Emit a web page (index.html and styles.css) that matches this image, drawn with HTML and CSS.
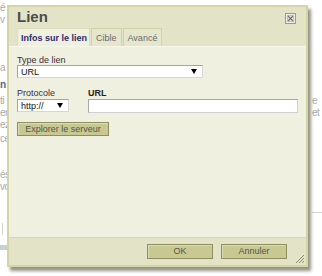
FILE: index.html
```html
<!DOCTYPE html>
<html lang="fr">
<head>
<meta charset="utf-8">
<title>Lien</title>
<link rel="stylesheet" href="styles.css">
</head>
<body>
<div class="page">
  <div class="strip strip-left">
    <div class="frag">é</div>
    <div class="frag">v</div>
    <div class="frag mt36">a</div>
    <div class="frag link mt5">n</div>
    <div class="frag mt4">ti</div>
    <div class="frag">en</div>
    <div class="frag">ez</div>
    <div class="frag mt2">ce</div>
    <div class="frag mt24">és</div>
    <div class="frag">vo</div>
    <div class="rule-v"></div>
    <div class="band"></div>
  </div>
  <div class="strip strip-right">
    <div class="frag mt95">e</div>
    <div class="frag">et</div>
    <div class="rule-h"></div>
  </div>
</div>

<div class="dialog">
  <div class="title-row">
    <div class="title">Lien</div>
    <svg class="close" width="11" height="11" viewBox="0 0 11 11">
      <rect x="0.5" y="0.5" width="10" height="10" fill="#ecece4" stroke="#9c9c94"/>
      <rect x="2.5" y="2.5" width="6" height="6" fill="none" stroke="#c4c4bc"/>
      <path d="M3 3 L8 8 M8 3 L3 8" stroke="#6f6f6a" stroke-width="1.2"/>
    </svg>
  </div>
  <div class="tabs">
    <div class="tab active">Infos sur le lien</div>
    <div class="tab">Cible</div>
    <div class="tab">Avancé</div>
  </div>
  <div class="content">
    <label class="field-label">Type de lien</label>
    <div class="select select-url">
      <span>URL</span>
      <svg width="6" height="5" viewBox="0 0 6 5"><polygon points="0,0 6,0 3,5" fill="#000"/></svg>
    </div>
    <div class="row">
      <div class="col-proto">
        <label class="field-label gap">Protocole</label>
        <div class="select select-proto">
          <span>http://</span>
          <svg width="6" height="5" viewBox="0 0 6 5"><polygon points="0,0 6,0 3,5" fill="#000"/></svg>
        </div>
      </div>
      <div class="col-url">
        <label class="field-label gap strong">URL</label>
        <div class="input"></div>
      </div>
    </div>
    <div class="btn browse">Explorer le serveur</div>
  </div>
  <div class="footer">
    <div class="btn footer-btn">OK</div>
    <div class="btn footer-btn">Annuler</div>
  </div>
  <svg class="grip" width="10" height="10" viewBox="0 0 10 10">
    <path d="M9 1 L1 9 M9 4 L4 9 M9 7 L7 9" stroke="#8a8a70" stroke-width="1"/>
  </svg>
</div>
</body>
</html>
```
FILE: styles.css
```css
* { box-sizing: border-box; }

body {
  margin: 0;
  width: 322px;
  height: 276px;
  overflow: hidden;
  position: relative;
  background: #fff;
  font-family: "Liberation Sans", Arial, sans-serif;
}

.page {
  display: flex;
  justify-content: space-between;
  height: 276px;
}

.strip {
  overflow: hidden;
  padding-top: 2px;
  display: flex;
  flex-direction: column;
}

.strip-left { width: 8px; }
.strip-right { width: 12px; padding-left: 2px; }

.frag {
  font-size: 10px;
  line-height: 12px;
  height: 12px;
  color: #a8a8a8;
  white-space: nowrap;
  letter-spacing: -0.5px;
}

.frag.link { color: #55649a; font-weight: bold; }

.mt2 { margin-top: 2px; }
.mt4 { margin-top: 4px; }
.mt5 { margin-top: 5px; }
.mt24 { margin-top: 24px; }
.mt36 { margin-top: 36px; }
.mt95 { margin-top: 93px; }

.rule-v {
  margin-top: 30px;
  margin-left: 2px;
  width: 1px;
  height: 12px;
  background: #d0d0d0;
}

.band {
  margin-top: 10px;
  height: 5px;
  background: #c9d0d4;
}

.rule-h {
  margin-top: 93px;
  height: 1px;
  background: #d4d4d4;
}

.dialog {
  position: absolute;
  left: 7px;
  top: 5px;
  width: 301px;
  height: 262px;
  border: 2px solid #d5d5a3;
  background: #e3e3c7;
  box-shadow: 3px 4px 3px rgba(60, 60, 40, 0.55);
  display: flex;
  flex-direction: column;
}

.title-row {
  height: 21px;
  display: flex;
  justify-content: space-between;
  align-items: flex-start;
  padding: 1px 10px 0 8px;
}

.title {
  font-size: 15px;
  font-weight: bold;
  line-height: 18px;
  color: #4d4d4d;
}

.close { margin-top: 5px; }

.tabs {
  display: flex;
  height: 18px;
  padding-left: 8px;
}

.tab {
  font-size: 9px;
  line-height: 17px;
  padding: 1px 4px 0;
  color: #6a6a6a;
  background: #e6e6cd;
  border: 1px solid #d3d3aa;
  border-bottom: none;
  margin-right: 1px;
  white-space: nowrap;
}

.tab.active {
  background: #f0f0e1;
  color: #2b2b6b;
  font-weight: bold;
  padding: 1px 2px 0 3px;
  border-color: #dcdcbc;
}

.content {
  flex: 1;
  background: #f0f0e1;
  border-top: 1px solid #f7f7ee;
  padding: 8px 8px 0 8px;
  font-size: 9px;
  color: #333;
  display: flex;
  flex-direction: column;
  align-items: flex-start;
}

.field-label {
  display: block;
  line-height: 10px;
  color: #3a2f3a;
}

.field-label.gap { margin-bottom: 1px; }
.field-label.strong { font-weight: bold; color: #222; }

.select {
  display: flex;
  align-items: center;
  justify-content: space-between;
  height: 13px;
  background: #fff;
  border: 1px solid;
  border-color: #a4a4a4 #d6d6d6 #d6d6d6 #a4a4a4;
  padding: 0 5px 0 3px;
  font-size: 9px;
  color: #111;
}

.select-url { width: 186px; }
.select-proto { width: 52px; }

.row {
  display: flex;
  align-self: stretch;
  margin-top: 10px;
}

.col-proto { width: 71px; }
.col-url { flex: 1; }

.input {
  height: 14px;
  background: #fff;
  border: 1px solid;
  border-color: #a8a8a8 #d0d0d0 #d0d0d0 #a8a8a8;
}

.btn {
  background: #c8c893;
  border: 1px solid #8e8e62;
  box-shadow: inset 1px 1px 0 #dcdcb4;
  color: #555549;
  font-size: 9px;
  text-align: center;
}

.browse {
  margin-top: 9px;
  width: 92px;
  height: 14px;
  line-height: 12px;
}

.footer {
  height: 28px;
  border-top: 1px solid #d6d6b0;
  display: flex;
  justify-content: flex-end;
  gap: 8px;
  padding: 6px 19px 0 0;
}

.footer-btn {
  width: 66px;
  height: 15px;
  line-height: 13px;
}

.grip {
  position: absolute;
  right: 1px;
  bottom: 1px;
}
```
